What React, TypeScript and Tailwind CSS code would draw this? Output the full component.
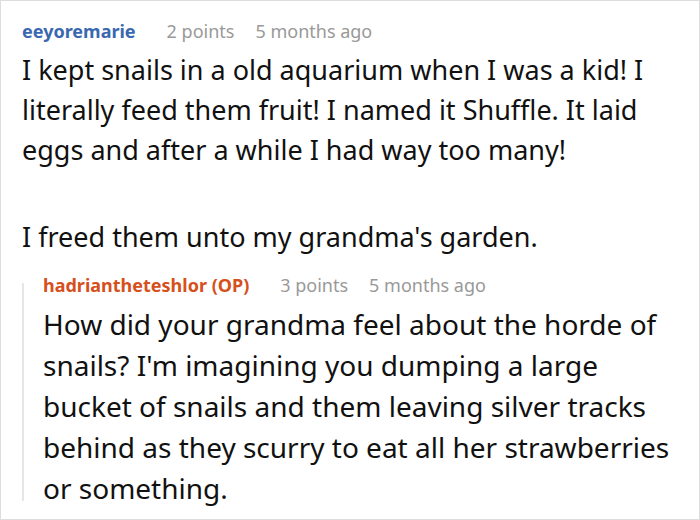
import React from 'react';

function Meta({ name, points, age, op }: { name: string; points: string; age: string; op?: boolean }) {
  return (
    <div className="flex items-baseline gap-[31px] text-[18px] leading-[24px]">
      <span className={op ? 'font-bold text-[#d6501c]' : 'font-bold text-[#3a68b0]'}>{name}</span>
      <span className="flex gap-[21px] text-[#999999]">
        <span>{points}</span>
        <span>{age}</span>
      </span>
    </div>
  );
}

export default function App() {
  return (
    <div
      className="w-[700px] h-[520px] overflow-hidden bg-white border border-[#dddddd] text-[#111111]"
      style={{ fontFamily: '"Noto Sans", "Open Sans", sans-serif' }}
    >
      <div className="pl-[21px] pr-[19px] pt-[18px]">
        <Meta name="eeyoremarie" points="2 points" age="5 months ago" />
        <div className="mt-[7px] text-[27px] leading-[40px]">
          <p>
            I kept snails in a old aquarium when I was a kid! I literally feed them fruit! I named it Shuffle. It laid
            eggs and after a while I had way too many!
          </p>
          <p className="mt-[47px]">I freed them unto my grandma's garden.</p>
        </div>
        <div className="relative mt-[16px] pl-[21px]">
          <div className="absolute left-0 top-[10px] bottom-[8px] w-[2px] bg-[#e6e6e6]" />
          <Meta name="hadriantheteshlor (OP)" points="3 points" age="5 months ago" op />
          <p className="mt-[7px] text-[28px] leading-[41px]">
            How did your grandma feel about the horde of snails? I'm imagining you dumping a large bucket of snails and
            them leaving silver tracks behind as they scurry to eat all her strawberries or something.
          </p>
        </div>
      </div>
    </div>
  );
}
